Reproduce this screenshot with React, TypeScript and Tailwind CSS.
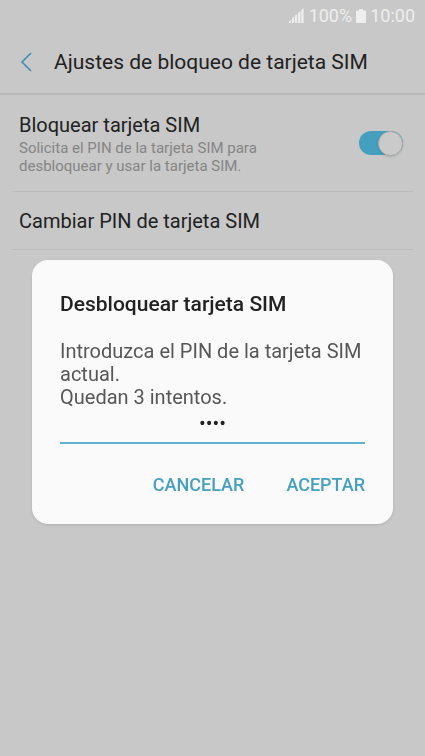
import React, { useState } from 'react';

function StatusBar() {
  return (
    <div className="flex h-[31px] items-center justify-end px-2.5 text-lg leading-[19px] text-[#eeeeee]">
      <svg width="15" height="15" viewBox="0 0 15 15" className="mr-[5px]" fill="currentColor" aria-hidden="true">
        <path d="M0 15v-1.5L2.2 12v3zM3 15v-4.5L5.2 8.5V15zM6 15V7.8L8.2 6v9zM9 15V5l2.4-2v12zM12.2 15V2.2L14.6 0v15z" />
      </svg>
      <span>100%</span>
      <svg width="10" height="14" viewBox="0 0 10 14" className="mx-1" fill="currentColor" aria-hidden="true">
        <path d="M3 0h4v1.5h2a1 1 0 0 1 1 1V13a1 1 0 0 1-1 1H1a1 1 0 0 1-1-1V2.5a1 1 0 0 1 1-1h2z" />
      </svg>
      <span>10:00</span>
    </div>
  );
}

export default function App() {
  const [locked, setLocked] = useState(true);
  const [pin, setPin] = useState('1234');

  return (
    <div className="min-h-screen bg-[#c8c8c8] font-['Roboto',sans-serif] text-[#222222]">
      <StatusBar />

      <header className="flex h-16 items-center border-b-2 border-[#b9b9b9] pl-5">
        <button type="button" aria-label="Atrás" className="mr-5 text-[#3f8fae]">
          <svg width="14" height="20" viewBox="0 0 14 20" fill="none" stroke="currentColor" strokeWidth="1.7">
            <path d="M11 1L2 10l9 9" />
          </svg>
        </button>
        <h1 className="text-[21px] leading-6">Ajustes de bloqueo de tarjeta SIM</h1>
      </header>

      <main className="px-3">
        <div className="flex items-center justify-between border-b border-[#bbbbbb] py-4 pr-2.5 pl-[7px]">
          <label htmlFor="sim-lock" className="w-64">
            <span className="block text-xl leading-7">Bloquear tarjeta SIM</span>
            <span className="block text-[15px] leading-[18px] text-[#858585]">
              Solicita el PIN de la tarjeta SIM para desbloquear y usar la tarjeta SIM.
            </span>
          </label>
          <span className="relative flex h-6 w-11 items-center">
            <input
              id="sim-lock"
              type="checkbox"
              role="switch"
              checked={locked}
              onChange={(e) => setLocked(e.target.checked)}
              className="peer h-6 w-full appearance-none rounded-full bg-[#999999] checked:bg-[#459fbf]"
            />
            <span className="pointer-events-none absolute left-0 size-[25px] rounded-full border border-[#aaaaaa] bg-[#cacaca] shadow-sm peer-checked:right-0 peer-checked:left-auto" />
          </span>
        </div>

        <button type="button" className="block w-full border-b border-[#bbbbbb] pt-[17px] pb-[15px] pl-[7px] text-left text-xl leading-[25px]">
          Cambiar PIN de tarjeta SIM
        </button>
      </main>

      <div className="fixed inset-0 flex items-center justify-center px-8 pt-7">
        <form
          role="dialog"
          aria-labelledby="dialog-title"
          onSubmit={(e) => e.preventDefault()}
          className="w-full max-w-md rounded-2xl bg-[#fafafa] px-7 pt-8 pb-[23px] shadow"
        >
          <h2 id="dialog-title" className="text-[21px] leading-6 font-medium">
            Desbloquear tarjeta SIM
          </h2>
          <label htmlFor="pin" className="mt-6 block text-xl leading-[23px] text-[#575757]">
            Introduzca el PIN de la tarjeta SIM actual.
            <br />
            Quedan 3 intentos.
          </label>
          <input
            id="pin"
            type="password"
            inputMode="numeric"
            maxLength={8}
            value={pin}
            onChange={(e) => setPin(e.target.value)}
            className="block w-full border-b-2 border-[#5fb3d0] pt-0.5 pb-[7px] text-center text-xl leading-6 outline-none"
          />
          <div className="mt-[25px] flex justify-end gap-[42px] text-lg leading-8 font-medium text-[#459fbf]">
            <button type="button">CANCELAR</button>
            <button type="submit">ACEPTAR</button>
          </div>
        </form>
      </div>
    </div>
  );
}
